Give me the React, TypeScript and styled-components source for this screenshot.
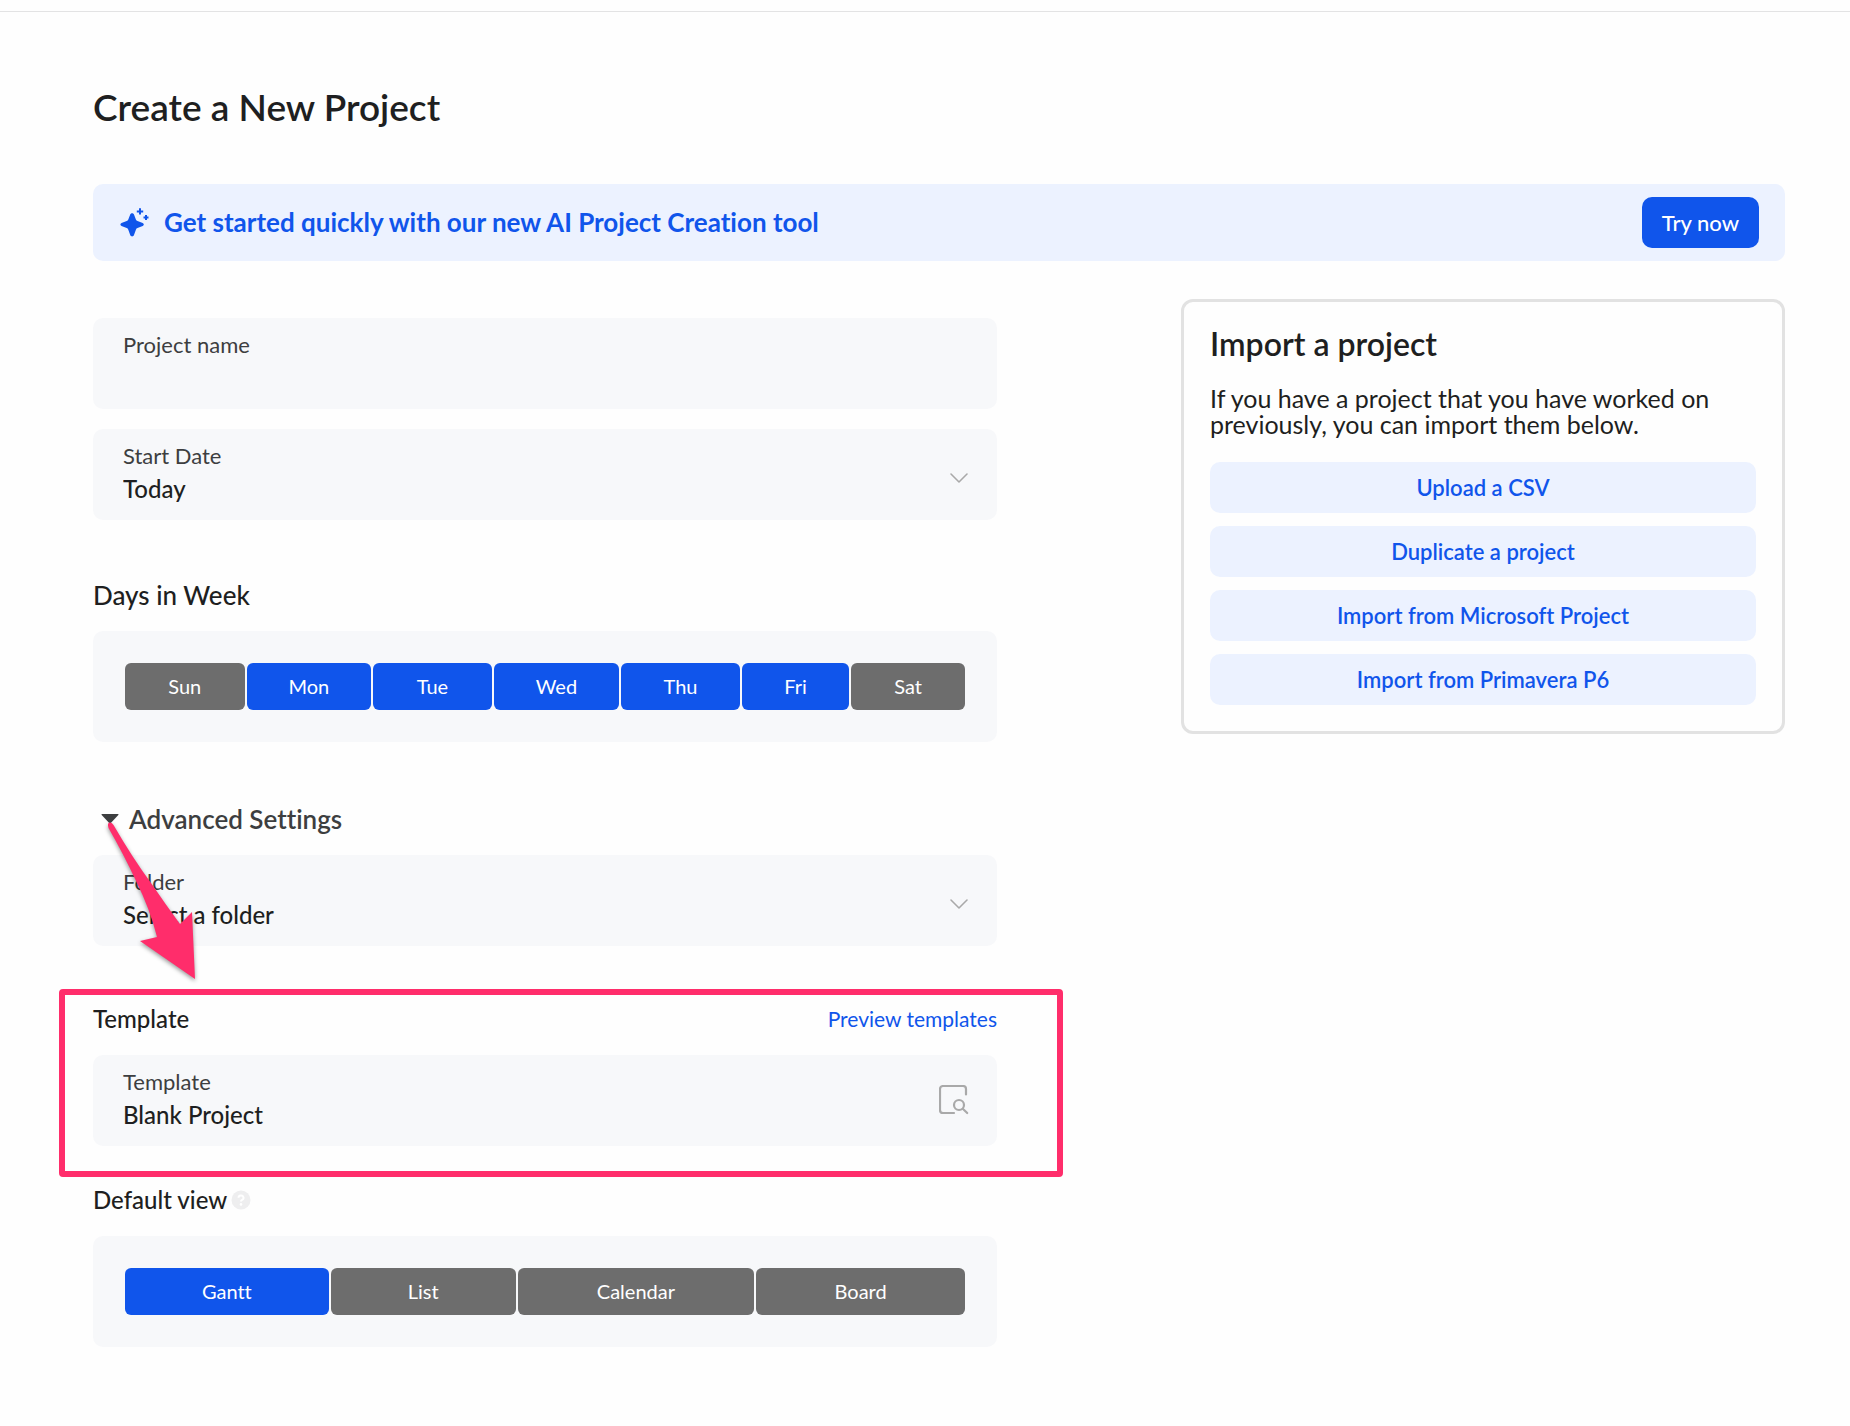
import React, { useState } from "react";
import styled, { createGlobalStyle } from "styled-components";

const color = {
  blue: "#1055eb",
  blueTint: "#ecf2ff",
  panel: "#f7f8fa",
  ink: "#1e1f21",
  inkSoft: "#3d3e40",
  grey: "#6d6d6d",
  pink: "#ff2d6b",
};

const GlobalStyle = createGlobalStyle`
  * { box-sizing: border-box; }
  body {
    margin: 0;
    background: #fefefe;
    color: ${color.ink};
    font-family: Lato, "Open Sans", "Liberation Sans", sans-serif;
    font-variant-ligatures: none;
  }
  button, input, select {
    font-family: inherit;
    font-variant-ligatures: none;
  }
`;

const TopBar = styled.div`
  height: 12px;
  border-bottom: 1px solid #e3e3e4;
`;

const Page = styled.main`
  padding: 73px 65px 80px 93px;
`;

const Title = styled.h1`
  margin: 0 0 55px;
  font-size: 37px;
  line-height: 44px;
  font-weight: 600;
`;

const Banner = styled.section`
  display: flex;
  align-items: center;
  gap: 13px;
  padding: 13px 26px;
  border-radius: 10px;
  background: ${color.blueTint};
  color: ${color.blue};
`;

const BannerText = styled.p`
  flex: 1;
  margin: 0;
  padding-bottom: 2px;
  font-size: 26px;
  line-height: 32px;
  font-weight: 700;
`;

const TryButton = styled.button`
  height: 51px;
  padding: 0 20px;
  border: 0;
  border-radius: 10px;
  background: ${color.blue};
  color: #fff;
  font-size: 22px;
  font-weight: 500;
`;

const Columns = styled.div`
  display: grid;
  grid-template-columns: minmax(0, 904fr) minmax(0, 604fr);
  column-gap: 184px;
  align-items: start;
`;

const Form = styled.form`
  display: flex;
  flex-direction: column;
  margin-top: 57px;
`;

const Fields = styled.div`
  display: flex;
  flex-direction: column;
  gap: 20px;
`;

const Field = styled.div`
  display: grid;
  grid-template-columns: minmax(0, 1fr) auto;
  align-items: center;
  padding: 12px 28px 13px 30px;
  border-radius: 10px;
  background: ${color.panel};
`;

const FieldText = styled.div`
  display: flex;
  flex-direction: column;
`;

const FieldLabel = styled.label`
  color: ${color.inkSoft};
  font-size: 22px;
  line-height: 30px;
`;

const TextInput = styled.input`
  width: 100%;
  height: 36px;
  padding: 0;
  border: 0;
  background: transparent;
  color: ${color.ink};
  font-size: 24px;
  outline: none;
`;

const Select = styled.select`
  appearance: none;
  width: 100%;
  height: 36px;
  padding: 0;
  border: 0;
  background: transparent;
  color: ${color.ink};
  font-size: 24px;
  line-height: 36px;
  font-weight: 500;
  outline: none;
`;

const Section = styled.section<{ $top: number }>`
  position: relative;
  display: flex;
  flex-direction: column;
  gap: 20px;
  margin-top: ${(p) => p.$top}px;
`;

const SectionHead = styled.div`
  display: flex;
  align-items: center;
  gap: 4px;
`;

const Heading = styled.h2<{ $large?: boolean }>`
  margin: 0;
  font-size: ${(p) => (p.$large ? 26 : 24)}px;
  line-height: 32px;
  font-weight: 500;
`;

const PreviewLink = styled.a`
  margin-left: auto;
  color: ${color.blue};
  font-size: 21px;
  line-height: 28px;
  text-decoration: none;
`;

const Disclosure = styled.button`
  display: flex;
  align-items: center;
  gap: 10px;
  padding: 0 0 0 8px;
  border: 0;
  background: transparent;
  color: ${color.inkSoft};
  font-size: 26px;
  line-height: 32px;
  font-weight: 600;
`;

const Segments = styled.div<{ $columns: string }>`
  display: grid;
  grid-template-columns: ${(p) => p.$columns};
  gap: 2px;
  padding: 32px;
  border-radius: 10px;
  background: ${color.panel};
`;

const Segment = styled.button<{ $on: boolean }>`
  height: 47px;
  padding: 0 0 2px;
  border: 0;
  border-radius: 6px;
  background: ${(p) => (p.$on ? color.blue : color.grey)};
  color: #fff;
  font-size: 20px;
`;

const Highlight = styled.div`
  position: absolute;
  inset: -14px -66px -31px -34px;
  border: 6px solid ${color.pink};
  border-radius: 4px;
  pointer-events: none;
`;

const Arrow = styled.svg`
  position: absolute;
  left: 7px;
  top: -182px;
  pointer-events: none;
  filter: drop-shadow(0 2px 2px rgba(0, 0, 0, 0.4));
`;

const ImportCard = styled.aside`
  margin-top: 38px;
  padding: 23px 26px 26px;
  border: 3px solid #e2e2e2;
  border-radius: 12px;
`;

const CardTitle = styled.h2`
  margin: 0 0 22px;
  font-size: 32px;
  line-height: 38px;
  font-weight: 600;
`;

const CardText = styled.p`
  margin: 0 0 25px;
  font-size: 25px;
  line-height: 26px;
`;

const ImportList = styled.div`
  display: flex;
  flex-direction: column;
  gap: 13px;
`;

const ImportButton = styled.button`
  height: 51px;
  border: 0;
  border-radius: 10px;
  background: ${color.blueTint};
  color: ${color.blue};
  font-size: 22px;
  font-weight: 600;
`;

const ChevronIcon = styled.svg`
  margin-top: 8px;
`;

function Sparkles() {
  return (
    <svg width="32" height="32" viewBox="0 0 32 32" fill="currentColor" aria-hidden="true">
      <path d="M11.3 7.3c.6-1.5 3-1.5 3.6 0l2 5.2c.3.8.8 1.3 1.6 1.6l5.2 2c1.5.6 1.5 2.4 0 3l-5.2 2c-.8.3-1.3.8-1.6 1.6l-2 5.6c-.6 1.5-3 1.5-3.6 0l-2-5.6c-.3-.8-.8-1.3-1.6-1.6l-5.2-2c-1.5-.6-1.5-2.4 0-3l5.2-2c.8-.3 1.3-.8 1.6-1.6z" />
      <path d="M21 1.2v6.4M17.8 4.4h6.4M27 8v5M24.5 10.5h5" stroke="currentColor" strokeWidth="2" strokeLinecap="butt" />
    </svg>
  );
}

function Chevron() {
  return (
    <ChevronIcon width="20" height="12" viewBox="0 0 20 12" fill="none" stroke="#a9a9a9" strokeWidth="1.6" strokeLinecap="round" strokeLinejoin="round" aria-hidden="true">
      <path d="M2 2l8 8 8-8" />
    </ChevronIcon>
  );
}

function TemplateSearch() {
  return (
    <svg width="30" height="30" viewBox="0 0 30 30" fill="none" stroke="#a9a9a9" strokeWidth="2.2" strokeLinecap="round" strokeLinejoin="round" aria-hidden="true">
      <path d="M15 28H4a3 3 0 0 1-3-3V4a3 3 0 0 1 3-3h20a3 3 0 0 1 3 3v5.500" />
      <circle cx="20" cy="20" r="5" />
      <path d="M23.800 23.800l4.400 4.200" />
    </svg>
  );
}

function Help() {
  return (
    <svg width="20" height="20" viewBox="0 0 20 20" role="img" aria-label="Help">
      <circle cx="10" cy="10" r="9.5" fill="#eeeeef" />
      <path d="M7.500 7.800a2.500 2.300 0 1 1 3.600 2.100c-.8.4-1.100.8-1.100 1.700" fill="none" stroke="#fff" strokeWidth="2" />
      <circle cx="10" cy="14.400" r="1.300" fill="#fff" />
    </svg>
  );
}

const days = ["Sun", "Mon", "Tue", "Wed", "Thu", "Fri", "Sat"];
const views = ["Gantt", "List", "Calendar", "Board"];
const imports = ["Upload a CSV", "Duplicate a project", "Import from Microsoft Project", "Import from Primavera P6"];

export default function App() {
  const [workDays, setWorkDays] = useState(["Mon", "Tue", "Wed", "Thu", "Fri"]);
  const [view, setView] = useState("Gantt");

  const toggleDay = (day: string) =>
    setWorkDays((current) => (current.includes(day) ? current.filter((d) => d !== day) : [...current, day]));

  return (
    <>
      <GlobalStyle />
      <TopBar />
      <Page>
        <Title>Create a New Project</Title>
        <Banner>
          <Sparkles />
          <BannerText>Get started quickly with our new AI Project Creation tool</BannerText>
          <TryButton type="button">Try now</TryButton>
        </Banner>
        <Columns>
          <Form onSubmit={(e) => e.preventDefault()}>
            <Fields>
              <Field>
                <FieldText>
                  <FieldLabel htmlFor="project-name">Project name</FieldLabel>
                  <TextInput id="project-name" type="text" />
                </FieldText>
              </Field>
              <Field>
                <FieldText>
                  <FieldLabel htmlFor="start-date">Start Date</FieldLabel>
                  <Select id="start-date">
                    <option>Today</option>
                  </Select>
                </FieldText>
                <Chevron />
              </Field>
            </Fields>

            <Section $top={59}>
              <Heading $large>Days in Week</Heading>
              <Segments $columns="120fr 125fr 119fr 126fr 119fr 108fr 114fr">
                {days.map((day) => (
                  <Segment key={day} type="button" $on={workDays.includes(day)} aria-pressed={workDays.includes(day)} onClick={() => toggleDay(day)}>
                    {day}
                  </Segment>
                ))}
              </Segments>
            </Section>

            <Section $top={61}>
              <Disclosure type="button" aria-expanded="true">
                <svg width="18" height="10" viewBox="0 0 18 10" fill="currentColor" aria-hidden="true">
                  <path d="M1 0h16q1 0 .3 1l-7.500 8q-.8.8-1.600 0L.7 1Q0 0 1 0z" />
                </svg>
                Advanced Settings
              </Disclosure>
              <Field>
                <FieldText>
                  <FieldLabel htmlFor="folder">Folder</FieldLabel>
                  <Select id="folder">
                    <option>Select a folder</option>
                  </Select>
                </FieldText>
                <Chevron />
              </Field>
            </Section>

            <Section $top={57}>
              <SectionHead>
                <Heading>Template</Heading>
                <PreviewLink href="#templates">Preview templates</PreviewLink>
              </SectionHead>
              <Field>
                <FieldText>
                  <FieldLabel htmlFor="template">Template</FieldLabel>
                  <Select id="template">
                    <option>Blank Project</option>
                  </Select>
                </FieldText>
                <TemplateSearch />
              </Field>
              <Highlight />
              <Arrow width="100" height="162" viewBox="0 0 100 162" aria-hidden="true">
                <path d="M8.500 7q-1.500-5 1-5.500t4 2.500Q32 36 51 62q15 22 29 41l12-12 3 67-55-38 17-4Q50 88 36 60 24 34 8.500 7z" fill={color.pink} />
              </Arrow>
            </Section>

            <Section $top={38}>
              <SectionHead>
                <Heading>Default view</Heading>
                <Help />
              </SectionHead>
              <Segments $columns="204fr 185fr 237fr 209fr">
                {views.map((name) => (
                  <Segment key={name} type="button" $on={view === name} aria-pressed={view === name} onClick={() => setView(name)}>
                    {name}
                  </Segment>
                ))}
              </Segments>
            </Section>
          </Form>

          <ImportCard>
            <CardTitle>Import a project</CardTitle>
            <CardText>If you have a project that you have worked on previously, you can import them below.</CardText>
            <ImportList>
              {imports.map((name) => (
                <ImportButton key={name} type="button">
                  {name}
                </ImportButton>
              ))}
            </ImportList>
          </ImportCard>
        </Columns>
      </Page>
    </>
  );
}
